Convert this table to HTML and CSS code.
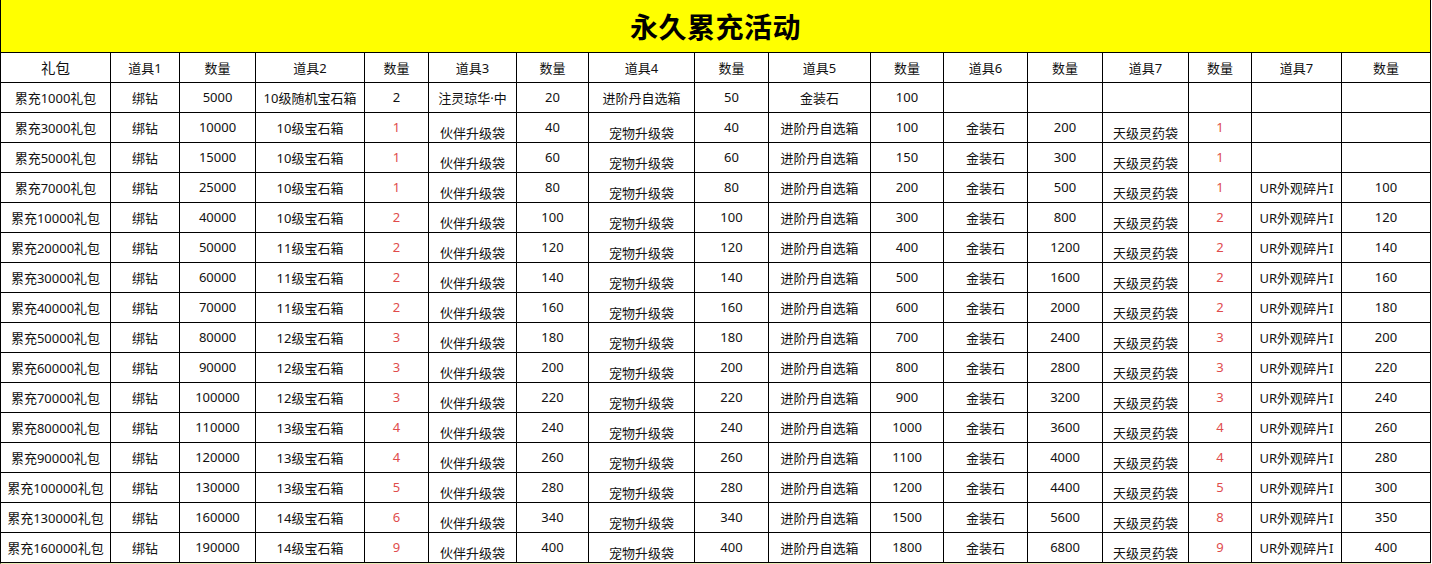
FILE: index.html
```html
<!DOCTYPE html>
<html lang="zh-CN">
<head>
<meta charset="utf-8">
<title>永久累充活动</title>
<link rel="stylesheet" href="styles.css">
</head>
<body>
<div class="sheet">
  <div class="title">永久累充活动</div>

  <div class="c big">礼包</div><div class="c">道具1</div><div class="c">数量</div><div class="c">道具2</div><div class="c">数量</div><div class="c">道具3</div><div class="c">数量</div><div class="c">道具4</div><div class="c">数量</div><div class="c">道具5</div><div class="c">数量</div><div class="c">道具6</div><div class="c">数量</div><div class="c">道具7</div><div class="c">数量</div><div class="c">道具7</div><div class="c">数量</div>

  <div class="c">累充1000礼包</div><div class="c">绑钻</div><div class="c">5000</div><div class="c">10级随机宝石箱</div><div class="c">2</div><div class="c">注灵琼华·中</div><div class="c">20</div><div class="c">进阶丹自选箱</div><div class="c">50</div><div class="c">金装石</div><div class="c">100</div><div class="c"></div><div class="c"></div><div class="c"></div><div class="c"></div><div class="c"></div><div class="c"></div>

  <div class="c">累充3000礼包</div><div class="c">绑钻</div><div class="c">10000</div><div class="c">10级宝石箱</div><div class="c r">1</div><div class="c lo">伙伴升级袋</div><div class="c">40</div><div class="c lo">宠物升级袋</div><div class="c">40</div><div class="c">进阶丹自选箱</div><div class="c">100</div><div class="c">金装石</div><div class="c">200</div><div class="c lo">天级灵药袋</div><div class="c r">1</div><div class="c"></div><div class="c"></div>

  <div class="c">累充5000礼包</div><div class="c">绑钻</div><div class="c">15000</div><div class="c">10级宝石箱</div><div class="c r">1</div><div class="c lo">伙伴升级袋</div><div class="c">60</div><div class="c lo">宠物升级袋</div><div class="c">60</div><div class="c">进阶丹自选箱</div><div class="c">150</div><div class="c">金装石</div><div class="c">300</div><div class="c lo">天级灵药袋</div><div class="c r">1</div><div class="c"></div><div class="c"></div>

  <div class="c">累充7000礼包</div><div class="c">绑钻</div><div class="c">25000</div><div class="c">10级宝石箱</div><div class="c r">1</div><div class="c lo">伙伴升级袋</div><div class="c">80</div><div class="c lo">宠物升级袋</div><div class="c">80</div><div class="c">进阶丹自选箱</div><div class="c">200</div><div class="c">金装石</div><div class="c">500</div><div class="c lo">天级灵药袋</div><div class="c r">1</div><div class="c">UR外观碎片I</div><div class="c">100</div>

  <div class="c">累充10000礼包</div><div class="c">绑钻</div><div class="c">40000</div><div class="c">10级宝石箱</div><div class="c r">2</div><div class="c lo">伙伴升级袋</div><div class="c">100</div><div class="c lo">宠物升级袋</div><div class="c">100</div><div class="c">进阶丹自选箱</div><div class="c">300</div><div class="c">金装石</div><div class="c">800</div><div class="c lo">天级灵药袋</div><div class="c r">2</div><div class="c">UR外观碎片I</div><div class="c">120</div>

  <div class="c">累充20000礼包</div><div class="c">绑钻</div><div class="c">50000</div><div class="c">11级宝石箱</div><div class="c r">2</div><div class="c lo">伙伴升级袋</div><div class="c">120</div><div class="c lo">宠物升级袋</div><div class="c">120</div><div class="c">进阶丹自选箱</div><div class="c">400</div><div class="c">金装石</div><div class="c">1200</div><div class="c lo">天级灵药袋</div><div class="c r">2</div><div class="c">UR外观碎片I</div><div class="c">140</div>

  <div class="c">累充30000礼包</div><div class="c">绑钻</div><div class="c">60000</div><div class="c">11级宝石箱</div><div class="c r">2</div><div class="c lo">伙伴升级袋</div><div class="c">140</div><div class="c lo">宠物升级袋</div><div class="c">140</div><div class="c">进阶丹自选箱</div><div class="c">500</div><div class="c">金装石</div><div class="c">1600</div><div class="c lo">天级灵药袋</div><div class="c r">2</div><div class="c">UR外观碎片I</div><div class="c">160</div>

  <div class="c">累充40000礼包</div><div class="c">绑钻</div><div class="c">70000</div><div class="c">11级宝石箱</div><div class="c r">2</div><div class="c lo">伙伴升级袋</div><div class="c">160</div><div class="c lo">宠物升级袋</div><div class="c">160</div><div class="c">进阶丹自选箱</div><div class="c">600</div><div class="c">金装石</div><div class="c">2000</div><div class="c lo">天级灵药袋</div><div class="c r">2</div><div class="c">UR外观碎片I</div><div class="c">180</div>

  <div class="c">累充50000礼包</div><div class="c">绑钻</div><div class="c">80000</div><div class="c">12级宝石箱</div><div class="c r">3</div><div class="c lo">伙伴升级袋</div><div class="c">180</div><div class="c lo">宠物升级袋</div><div class="c">180</div><div class="c">进阶丹自选箱</div><div class="c">700</div><div class="c">金装石</div><div class="c">2400</div><div class="c lo">天级灵药袋</div><div class="c r">3</div><div class="c">UR外观碎片I</div><div class="c">200</div>

  <div class="c">累充60000礼包</div><div class="c">绑钻</div><div class="c">90000</div><div class="c">12级宝石箱</div><div class="c r">3</div><div class="c lo">伙伴升级袋</div><div class="c">200</div><div class="c lo">宠物升级袋</div><div class="c">200</div><div class="c">进阶丹自选箱</div><div class="c">800</div><div class="c">金装石</div><div class="c">2800</div><div class="c lo">天级灵药袋</div><div class="c r">3</div><div class="c">UR外观碎片I</div><div class="c">220</div>

  <div class="c">累充70000礼包</div><div class="c">绑钻</div><div class="c">100000</div><div class="c">12级宝石箱</div><div class="c r">3</div><div class="c lo">伙伴升级袋</div><div class="c">220</div><div class="c lo">宠物升级袋</div><div class="c">220</div><div class="c">进阶丹自选箱</div><div class="c">900</div><div class="c">金装石</div><div class="c">3200</div><div class="c lo">天级灵药袋</div><div class="c r">3</div><div class="c">UR外观碎片I</div><div class="c">240</div>

  <div class="c">累充80000礼包</div><div class="c">绑钻</div><div class="c">110000</div><div class="c">13级宝石箱</div><div class="c r">4</div><div class="c lo">伙伴升级袋</div><div class="c">240</div><div class="c lo">宠物升级袋</div><div class="c">240</div><div class="c">进阶丹自选箱</div><div class="c">1000</div><div class="c">金装石</div><div class="c">3600</div><div class="c lo">天级灵药袋</div><div class="c r">4</div><div class="c">UR外观碎片I</div><div class="c">260</div>

  <div class="c">累充90000礼包</div><div class="c">绑钻</div><div class="c">120000</div><div class="c">13级宝石箱</div><div class="c r">4</div><div class="c lo">伙伴升级袋</div><div class="c">260</div><div class="c lo">宠物升级袋</div><div class="c">260</div><div class="c">进阶丹自选箱</div><div class="c">1100</div><div class="c">金装石</div><div class="c">4000</div><div class="c lo">天级灵药袋</div><div class="c r">4</div><div class="c">UR外观碎片I</div><div class="c">280</div>

  <div class="c">累充100000礼包</div><div class="c">绑钻</div><div class="c">130000</div><div class="c">13级宝石箱</div><div class="c r">5</div><div class="c lo">伙伴升级袋</div><div class="c">280</div><div class="c lo">宠物升级袋</div><div class="c">280</div><div class="c">进阶丹自选箱</div><div class="c">1200</div><div class="c">金装石</div><div class="c">4400</div><div class="c lo">天级灵药袋</div><div class="c r">5</div><div class="c">UR外观碎片I</div><div class="c">300</div>

  <div class="c">累充130000礼包</div><div class="c">绑钻</div><div class="c">160000</div><div class="c">14级宝石箱</div><div class="c r">6</div><div class="c lo">伙伴升级袋</div><div class="c">340</div><div class="c lo">宠物升级袋</div><div class="c">340</div><div class="c">进阶丹自选箱</div><div class="c">1500</div><div class="c">金装石</div><div class="c">5600</div><div class="c lo">天级灵药袋</div><div class="c r">8</div><div class="c">UR外观碎片I</div><div class="c">350</div>

  <div class="c">累充160000礼包</div><div class="c">绑钻</div><div class="c">190000</div><div class="c">14级宝石箱</div><div class="c r">9</div><div class="c lo">伙伴升级袋</div><div class="c">400</div><div class="c lo">宠物升级袋</div><div class="c">400</div><div class="c">进阶丹自选箱</div><div class="c">1800</div><div class="c">金装石</div><div class="c">6800</div><div class="c lo">天级灵药袋</div><div class="c r">9</div><div class="c">UR外观碎片I</div><div class="c">400</div>
</div>
</body>
</html>
```

FILE: styles.css
```css
html, body {
  margin: 0;
  padding: 0;
  background: #ffffff;
}

body {
  font-family: "Noto Sans", "Noto Sans CJK SC", sans-serif;
  font-size: 13px;
  color: #111111;
}

.sheet {
  display: grid;
  grid-template-columns: 110px 69px 76px 109px 64px 88px 72px 106px 74px 102px 73px 84px 75px 86px 63px 90px 89px;
  grid-template-rows: 53px;
  grid-auto-rows: 30px;
  width: max-content;
  border-left: 1px solid #000000;
  border-bottom: 1px solid #e8ecb8;
}

.title {
  grid-column: 1 / -1;
  background: #ffff00;
  border-right: 1px solid #000000;
  border-bottom: 1px solid #000000;
  display: flex;
  align-items: center;
  justify-content: center;
  font-family: "Noto Sans CJK SC", sans-serif;
  font-size: 28px;
  font-weight: 700;
  color: #000000;
  letter-spacing: 0.5px;
}

.c {
  box-sizing: border-box;
  border-right: 1px solid #000000;
  border-bottom: 1px solid #000000;
  display: flex;
  align-items: center;
  justify-content: center;
  white-space: nowrap;
  overflow: hidden;
  padding-bottom: 1px;
}

.big {
  font-size: 14.5px;
}

.r {
  color: #e04c4c;
}

.lo {
  padding-top: 9px;
  padding-bottom: 0;
}
```
